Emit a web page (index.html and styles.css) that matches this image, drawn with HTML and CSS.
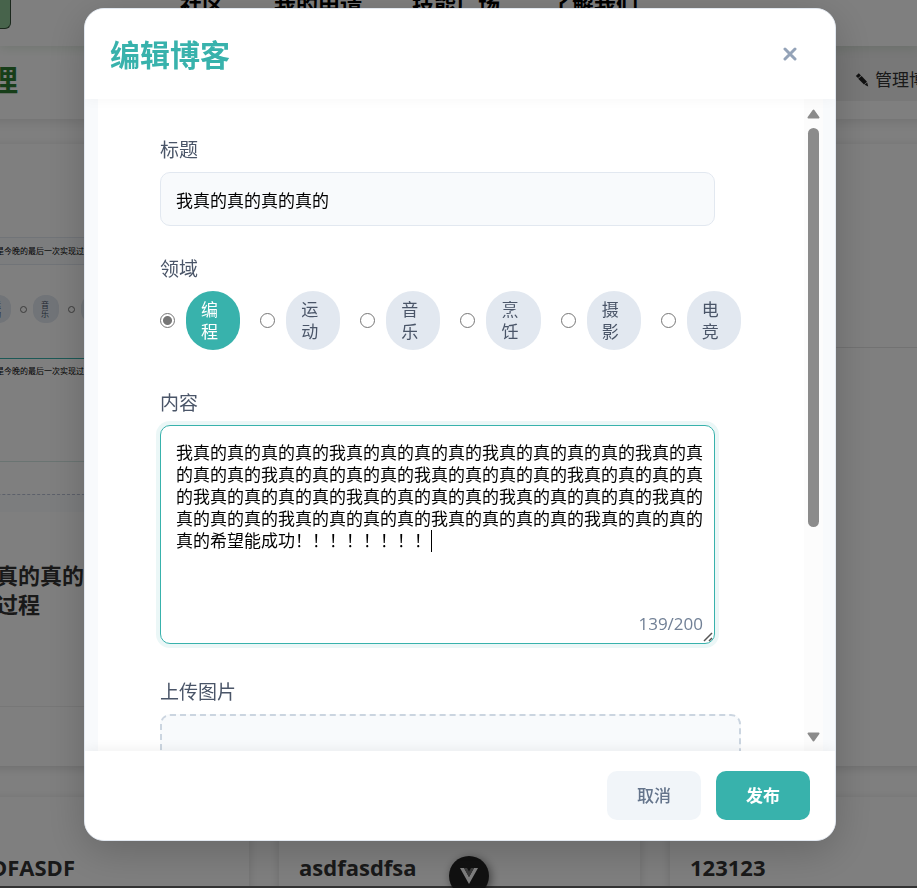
FILE: index.html
```html
<!DOCTYPE html>
<html lang="zh-CN">
<head>
<meta charset="utf-8">
<meta name="viewport" content="width=device-width, initial-scale=1">
<title>编辑博客</title>
<link rel="stylesheet" href="styles.css">
</head>
<body>
<div class="page">
  <header class="site-header">
    <span class="site-logo"></span>
    <nav class="site-nav">
      <a href="#">社区</a><a href="#">我的申请</a><a href="#">技能广场</a><a href="#">了解我们</a>
    </nav>
  </header>
  <section class="toolbar">
    <h1 class="toolbar-title">博客管理</h1>
    <button class="manage" type="button">
      <svg width="14" height="14" viewBox="0 0 14 14" aria-hidden="true"><path d="M.8 3 3.8.2 6 2.4 3 5zM3.2 5.8 6.6 3 12 8.8 9 11.4zM9.6 11.8 12.2 9.6 13.2 13.4z" fill="#222"/></svg>
      管理博客
    </button>
  </section>
  <main class="cards">
    <article class="card">
      <div class="thumb">
        <p class="thumb-input">是今晚的最后一次实现过程</p>
        <div class="thumb-tags">
          <span class="mini-tag">运动</span><i class="mini-dot"></i><span class="mini-tag">音乐</span><i class="mini-dot"></i><span class="mini-tag">烹饪</span>
        </div>
        <p class="thumb-area">是今晚的最后一次实现过程</p>
        <div class="thumb-upload"></div>
      </div>
      <h2 class="card-title">真的真的真的真的真的<br>一次实现过程</h2>
      <div class="card-foot"></div>
    </article>
    <article class="card"></article>
    <article class="card"><div class="photo"></div></article>
    <article class="card card-low"><h2 class="card-title">ASDFASDFASDF</h2></article>
    <article class="card card-low"><h2 class="card-title">asdfasdfsa</h2></article>
    <article class="card card-low"><h2 class="card-title">123123</h2></article>
  </main>
  <div class="page-edge"></div>
  <button class="devtools" type="button" aria-label="Vue">
    <svg width="18" height="16" viewBox="0 0 18 16"><path d="M0 0h4l5 9 5-9h4L9 16z" fill="#fff"/><path d="M4 0h3l2 3.4L11 0h3L9 9z" fill="#777"/></svg>
  </button>
</div>

<div class="overlay">
  <form class="modal" role="dialog" aria-labelledby="dialog-title">
    <header class="modal-header">
      <h2 class="modal-title" id="dialog-title">编辑博客</h2>
      <button class="close" type="button" aria-label="关闭">
        <svg width="14" height="14" viewBox="0 0 14 14"><path d="M2 2l10 10M12 2 2 12" stroke="#94a3b8" stroke-width="3" stroke-linecap="round"/></svg>
      </button>
    </header>
    <div class="modal-body">
      <div class="scroll-area">
        <div class="group">
          <label class="label" for="title">标题</label>
          <input class="field" id="title" type="text" value="我真的真的真的真的">
        </div>
        <fieldset class="group group-tags">
          <legend class="label">领域</legend>
          <div class="tags">
            <div class="tag"><input type="radio" name="area" id="t1" checked><label for="t1">编程</label></div>
            <div class="tag"><input type="radio" name="area" id="t2"><label for="t2">运动</label></div>
            <div class="tag"><input type="radio" name="area" id="t3"><label for="t3">音乐</label></div>
            <div class="tag"><input type="radio" name="area" id="t4"><label for="t4">烹饪</label></div>
            <div class="tag"><input type="radio" name="area" id="t5"><label for="t5">摄影</label></div>
            <div class="tag"><input type="radio" name="area" id="t6"><label for="t6">电竞</label></div>
          </div>
        </fieldset>
        <div class="group group-content">
          <label class="label" for="content">内容</label>
          <div class="area-wrap">
            <textarea class="field area" id="content" maxlength="200">我真的真的真的真的我真的真的真的真的我真的真的真的真的我真的真的真的真的我真的真的真的真的我真的真的真的真的我真的真的真的真的我真的真的真的真的我真的真的真的真的我真的真的真的真的我真的真的真的真的我真的真的真的真的我真的真的真的真的我真的真的真的真的希望能成功！！！！！！！！</textarea>
            <span class="caret"></span>
            <span class="counter">139/200</span>
            <svg class="grip" width="10" height="10" viewBox="0 0 10 10" aria-hidden="true"><path d="M1 9 9 1M6 9 9 6" stroke="#555" stroke-width="1.5"/></svg>
          </div>
        </div>
        <div class="group">
          <label class="label" for="upload">上传图片</label>
          <div class="upload"><input id="upload" type="file" accept="image/*"></div>
        </div>
      </div>
      <div class="scrollbar" aria-hidden="true">
        <svg width="13" height="10" viewBox="0 0 13 10"><path d="M6.5 1.5 11.5 8.5h-10z" fill="#8b8b8b" stroke="#8b8b8b" stroke-width="2" stroke-linejoin="round"/></svg>
        <span class="track"><span class="bar"></span></span>
        <svg width="13" height="10" viewBox="0 0 13 10"><path d="M6.5 8.5 1.5 1.5h10z" fill="#8b8b8b" stroke="#8b8b8b" stroke-width="2" stroke-linejoin="round"/></svg>
      </div>
    </div>
    <footer class="modal-footer">
      <button class="btn btn-cancel" type="button">取消</button>
      <button class="btn btn-publish" type="submit">发布</button>
    </footer>
  </form>
</div>
</body>
</html>
```
FILE: styles.css
```css
* { box-sizing: border-box; }

body {
  margin: 0;
  height: 100vh;
  overflow: hidden;
  font-family: "Open Sans", "Noto Sans CJK SC", sans-serif;
  font-size: 17px;
  line-height: 22px;
  background: #fff;
}

h1, h2, p { margin: 0; }
button, input, textarea { font: inherit; }

/* Page behind the dialog */
.page {
  position: relative;
  height: 100vh;
  overflow: hidden;
}

.site-header {
  position: relative;
  z-index: 1;
  display: flex;
  height: 46px;
  box-shadow: 0 2px 10px rgba(46, 125, 50, .15);
  background: #fff;
}

.site-logo {
  width: 11px;
  height: 29px;
  border: solid #37513a;
  border-width: 0 1px 1px 0;
  border-radius: 0 0 6px 0;
  background: #8fc796;
}

.site-nav {
  display: flex;
  gap: 50px;
  margin: -7px 0 0 169px;
}

.site-nav a {
  color: #000;
  font-size: 22px;
  font-weight: 700;
  text-decoration: none;
  white-space: nowrap;
}

.toolbar {
  display: flex;
  justify-content: space-between;
  height: 73px;
  margin-left: -102px;
  margin-right: -48px;
  box-shadow: 0 2px 12px rgba(0, 0, 0, .12);
}

.toolbar-title {
  color: #2e7d32;
  font-size: 30px;
  line-height: 68px;
}

.manage {
  display: flex;
  align-items: center;
  gap: 6px;
  height: 55px;
  padding: 12px 22px 0;
  border: 0;
  background: #f0f0f0;
  color: #333;
  white-space: nowrap;
}

.cards {
  display: grid;
  grid-template-columns: repeat(3, 361px);
  gap: 31px 30px;
  margin: 25px 0 0 -112px;
}

.card {
  min-height: 622px;
  background: #fff;
  box-shadow: 0 2px 10px rgba(0, 0, 0, .14);
}

.card-low { padding-top: 34px; }
.card-low .card-title { padding-top: 22px; }
.photo { height: 204px; border-bottom: 1px solid #e4e4e4; }

.thumb {
  height: 368px;
  padding: 93px 0 0 108px;
  border-bottom: 1px solid #eee;
  font-size: 8px;
  line-height: 26px;
  white-space: nowrap;
}

.thumb-input {
  margin-left: -108px;
  padding-left: 108px;
  border: solid #e2e8f0;
  border-width: 1px 0;
  background: #f8fafc;
}

.thumb-tags {
  display: flex;
  align-items: center;
  gap: 7px;
  padding-top: 30px;
  margin-left: -11px;
}

.mini-tag {
  width: 26px;
  padding: 5px 9px 5px 8px;
  border-radius: 12px;
  background: #e2e8f0;
  color: #4a5568;
  line-height: 9px;
  white-space: normal;
}

.mini-dot {
  width: 7px;
  height: 7px;
  margin: 0 -1px 0 2px;
  border: 1px solid #777;
  border-radius: 50%;
}

.thumb-area {
  height: 104px;
  margin: 35px 0 0 -108px;
  padding-left: 108px;
  border: solid #38b2ac;
  border-width: 1px 0;
  border-bottom-color: #d5e9e5;
  line-height: 24px;
}

.thumb-upload {
  height: 18px;
  margin: 32px 0 0 -108px;
  border-top: 1px dashed #b9c0d4;
  background: #f8fafc;
}

.card-title {
  padding: 49px 20px 0;
  color: #333;
  font-size: 22px;
  line-height: 29px;
}

.card-foot {
  margin-top: 87px;
  border-top: 1px solid #eee;
}

.page-edge {
  position: absolute;
  inset: auto 0 0;
  height: 2px;
  background: #666;
}

.devtools {
  position: absolute;
  left: calc(50% + 10px);
  bottom: -8px;
  width: 40px;
  height: 40px;
  padding: 0;
  margin-left: -20px;
  border: 0;
  border-radius: 50%;
  background: #222;
  box-shadow: 2px 2px 10px rgba(0, 0, 0, .5);
}

.devtools svg { display: block; margin: 0 auto; }

/* Dialog */
.overlay {
  position: fixed;
  inset: 0;
  z-index: 2;
  display: flex;
  padding: 8px 81px 47px 84px;
  background: rgba(0, 0, 0, .5);
}

.modal {
  display: flex;
  flex: 1;
  flex-direction: column;
  min-width: 0;
  overflow: hidden;
  border: 1px solid #e2e8f0;
  border-radius: 20px;
  background: #f8fafc;
  box-shadow: 0 10px 40px rgba(0, 0, 0, .2);
}

.modal-header, .modal-footer {
  z-index: 1;
  display: flex;
  flex: none;
  align-items: center;
  padding: 0 25px;
  height: 90px;
  background: #fff;
}

.modal-header {
  justify-content: space-between;
  box-shadow: 0 2px 12px rgba(0, 0, 0, .03);
}

.modal-footer {
  justify-content: flex-end;
  gap: 15px;
  height: 89px;
  box-shadow: 0 -2px 12px rgba(0, 0, 0, .06);
}

.modal-title {
  padding-top: 2px;
  color: #38b2ac;
  font-size: 30px;
  line-height: 40px;
}

.close {
  display: grid;
  place-items: center;
  width: 40px;
  height: 40px;
  padding: 0;
  border: 0;
  background: none;
}

.modal-body {
  display: flex;
  flex: 1;
  min-height: 0;
  margin: 0 12px 0 13px;
  background: #fff;
}

.scroll-area {
  flex: 1;
  min-width: 0;
  overflow: hidden;
  padding: 39px 63px 0 62px;
}

.group {
  min-width: 0;
  margin: 0 0 31px;
  padding: 0;
  border: 0;
}

.group-tags { padding-bottom: 10px; }
.group-content { padding-bottom: 5px; }

.label {
  display: block;
  margin-bottom: 9px;
  padding: 0;
  color: #4a5568;
  font-size: 19px;
  line-height: 25px;
}

.field {
  display: block;
  width: 100%;
  height: 54px;
  padding: 15px 11px 15px 15px;
  border: 1px solid #e2e8f0;
  border-radius: 10px;
  outline: 0;
  background: #f8fafc;
  color: #000;
}

#title, .area-wrap { width: calc(100% - 26px); }

.tags {
  display: grid;
  grid-template-columns: repeat(6, 1fr);
  gap: 20px;
}

.tag {
  display: flex;
  align-items: center;
  gap: 11px;
}

.tag input {
  appearance: none;
  flex: none;
  width: 15px;
  height: 15px;
  margin: 0;
  border: 1px solid #767676;
  border-radius: 50%;
  background: #fff;
}

.tag input:checked { background: radial-gradient(circle, #767676 4px, #fff 5px); }

.tag label {
  flex: 1;
  min-width: 0;
  padding: 8px 15px 7px;
  border-radius: 27px;
  background: #e2e8f0;
  color: #4a5568;
}

.tag input:checked + label {
  background: #38b2ac;
  color: #fff;
}

.area-wrap { position: relative; }

.area {
  height: 219px;
  padding-top: 16px;
  resize: none;
  border-color: #38b2ac;
  background: #fff;
  box-shadow: 0 0 0 4px rgba(56, 178, 172, .1);
}

.caret {
  position: absolute;
  left: 271px;
  top: 105px;
  width: 1px;
  height: 22px;
  background: #000;
}

.counter {
  position: absolute;
  right: 12px;
  bottom: 9px;
  color: #718096;
}

.grip {
  position: absolute;
  right: 2px;
  bottom: 2px;
}

.upload {
  height: 160px;
  border: 2px dashed #cbd5e0;
  border-radius: 10px;
  background: #f8fafc;
}

.upload input {
  width: 100%;
  height: 100%;
  opacity: 0;
}

.scrollbar {
  display: flex;
  flex: none;
  flex-direction: column;
  align-items: center;
  gap: 9px;
  width: 19px;
  padding: 10px 0 9px;
  background: #fcfcfc;
}

.track { flex: 1; width: 11px; }

.bar {
  display: block;
  height: 67%;
  border-radius: 6px;
  background: #8b8b8b;
}

.btn {
  height: 49px;
  padding: 0 30px;
  border: 0;
  border-radius: 10px;
  font-weight: 500;
}

.btn-cancel {
  background: #f1f5f9;
  color: #64748b;
}

.btn-publish {
  background: #38b2ac;
  color: #fff;
  font-weight: 700;
}
```
